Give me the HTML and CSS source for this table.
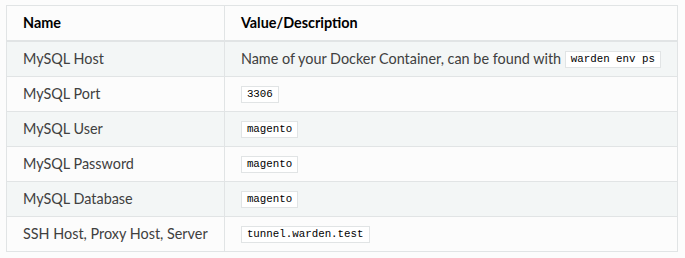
FILE: index.html
```html
<!DOCTYPE html>
<html>
<head>
<meta charset="utf-8">
<link rel="stylesheet" href="styles.css">
</head>
<body>
<div class="page">
<table class="docs">
  <thead>
    <tr><th class="c1">Name</th><th>Value/Description</th></tr>
  </thead>
  <tbody>
    <tr class="odd"><td>MySQL Host</td><td>Name of your Docker Container, can be found with <code>warden env ps</code></td></tr>
    <tr><td>MySQL Port</td><td><code>3306</code></td></tr>
    <tr class="odd"><td>MySQL User</td><td><code>magento</code></td></tr>
    <tr><td>MySQL Password</td><td><code>magento</code></td></tr>
    <tr class="odd"><td>MySQL Database</td><td><code>magento</code></td></tr>
    <tr><td>SSH Host, Proxy Host, Server</td><td><code>tunnel.warden.test</code></td></tr>
  </tbody>
</table>
</div>
</body>
</html>
```

FILE: styles.css
```css
html, body {
  margin: 0;
  padding: 0;
  background: #fcfcfc;
}
.page {
  padding: 5px 0 0 6px;
}
.docs {
  border-collapse: separate;
  border-spacing: 0;
  border: 1px solid #e1e4e5;
  width: 672px;
  font-family: Lato, "Open Sans", sans-serif;
  font-size: 14.4px;
  color: #404040;
  background: #fcfcfc;
}
.docs th, .docs td {
  padding: 8px 16px;
  height: 18px;
  line-height: 18px;
  text-align: left;
  vertical-align: top;
  white-space: nowrap;
}
.docs th + th, .docs td + td {
  border-left: 1px solid #e1e4e5;
}
.docs th {
  font-weight: 700;
  color: #000;
  border-bottom: 2px solid #e1e4e5;
}
.docs td {
  border-bottom: 1px solid #e1e4e5;
}
.docs tbody tr:last-child td {
  border-bottom: 0;
}
.docs .c1 {
  width: 185px;
}
.docs tr.odd td {
  background: #f3f6f6;
}
.docs code {
  display: inline-block;
  vertical-align: top;
  margin-top: 1px;
  height: 15px;
  line-height: 15px;
  font-family: "Liberation Mono", "DejaVu Sans Mono", monospace;
  font-size: 10.8px;
  color: #000;
  background: #fff;
  border: 1px solid #e1e4e5;
  padding: 0 5px;
}
```
